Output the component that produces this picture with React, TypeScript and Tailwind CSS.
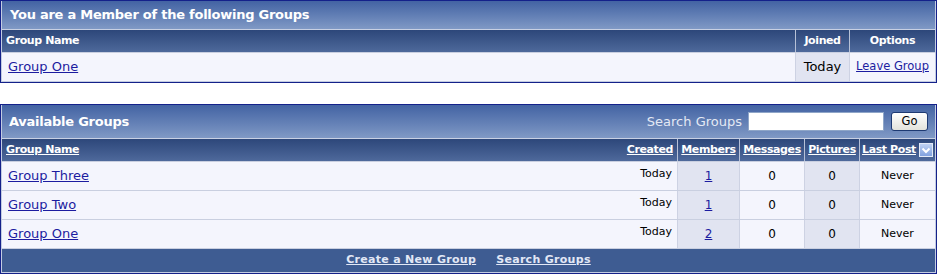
import React from "react";

const groups = [
  { name: "Group Three", created: "Today", members: "1", messages: "0", pictures: "0", lastPost: "Never" },
  { name: "Group Two", created: "Today", members: "1", messages: "0", pictures: "0", lastPost: "Never" },
  { name: "Group One", created: "Today", members: "2", messages: "0", pictures: "0", lastPost: "Never" },
];

const SortIcon: React.FC = () => (
  <svg width="14" height="14" viewBox="0 0 14 14" className="ml-[3px]">
    <defs>
      <linearGradient id="sortg" x1="0" y1="0" x2="0" y2="1">
        <stop offset="0" stopColor="#c2d4f4" />
        <stop offset="1" stopColor="#7e9fde" />
      </linearGradient>
    </defs>
    <rect x="0.5" y="0.5" width="13" height="13" fill="url(#sortg)" stroke="#e3eaf8" />
    <path d="M3.5 5.5 L7 9 L10.5 5.5" fill="none" stroke="#ffffff" strokeWidth="2" />
  </svg>
);

const MemberPanel: React.FC = () => (
  <div className="border border-[#14218a]">
    <div className="border border-[#c3cce2] border-t-0">
      <div className="h-[29px] flex items-center px-[8px] bg-gradient-to-b from-[#4363a3] to-[#8099c5] border-b border-[#c8d0e3] text-white font-bold text-[13px] tracking-[-0.25px]">
        You are a Member of the following Groups
      </div>
      <div className="grid grid-cols-[1fr_54px_86px] h-[22px] bg-gradient-to-b from-[#2d477a] to-[#4e699b] text-white font-bold text-[11px] tracking-[-0.4px]">
        <div className="flex items-center px-[4px]">Group Name</div>
        <div className="flex items-center justify-center border-l border-[#b7c1d7]">Joined</div>
        <div className="flex items-center justify-center border-l border-[#b7c1d7]">Options</div>
      </div>
      <div className="grid grid-cols-[1fr_54px_86px] h-[29px] bg-[#f4f5fd] border-t border-[#c9cfe0]">
        <div className="flex items-center px-[6px] text-[13px]">
          <a href="#" className="text-[#1c1ca0] underline">Group One</a>
        </div>
        <div className="flex items-center justify-center bg-[#e1e4f1] border-l border-[#cdd2e3] text-[13px] text-black">Today</div>
        <div className="flex items-center justify-center border-l border-[#cdd2e3] text-[11.5px]">
          <a href="#" className="text-[#1c1ca0] underline">Leave Group</a>
        </div>
      </div>
    </div>
  </div>
);

const cols = "grid grid-cols-[1fr_80px_62px_65px_55px_76px]";

const AvailablePanel: React.FC = () => (
  <div className="mt-[21px] border border-[#14218a]">
    <div className="border border-[#c3cce2] border-t-0">
      <div className="h-[34px] flex items-center justify-between pl-[7px] pr-[7px] bg-gradient-to-b from-[#4363a3] to-[#8099c5] border-b border-[#c8d0e3]">
        <span className="text-white font-bold text-[13px] tracking-[-0.25px]">Available Groups</span>
        <div className="flex items-center">
          <span className="text-[#e4e9f4] text-[13px] mr-[6px]">Search Groups</span>
          <input className="w-[136px] h-[19px] bg-white border border-[#8fa6c8] outline-none" />
          <button className="ml-[7px] w-[37px] h-[19px] rounded-[3px] border border-[#1e3a72] bg-gradient-to-b from-white to-[#e3e3dc] text-[11.5px] text-black">
            Go
          </button>
        </div>
      </div>
      <div className={`${cols} h-[22px] bg-gradient-to-b from-[#2d477a] to-[#4e699b] text-white font-bold text-[11px] tracking-[-0.4px]`}>
        <div className="flex items-center px-[4px]"><a href="#" className="underline">Group Name</a></div>
        <div className="flex items-center justify-end pr-[4px]"><a href="#" className="underline">Created</a></div>
        <div className="flex items-center justify-center border-l border-[#b7c1d7]"><a href="#" className="underline">Members</a></div>
        <div className="flex items-center justify-center border-l border-[#b7c1d7]"><a href="#" className="underline">Messages</a></div>
        <div className="flex items-center justify-center border-l border-[#b7c1d7]"><a href="#" className="underline">Pictures</a></div>
        <div className="flex items-center justify-center border-l border-[#b7c1d7]">
          <a href="#" className="underline">Last Post</a>
          <SortIcon />
        </div>
      </div>
      {groups.map((g) => (
        <div key={g.name} className={`${cols} h-[29px] bg-[#f4f5fd] border-t border-[#c9cfe0] text-black`}>
          <div className="flex items-center px-[6px] text-[13px]">
            <a href="#" className="text-[#1c1ca0] underline">{g.name}</a>
          </div>
          <div className="flex items-center justify-end pr-[5px] pb-[3px] text-[11px]">{g.created}</div>
          <div className="flex items-center justify-center bg-[#e1e4f1] border-l border-[#cdd2e3] text-[12px]">
            <a href="#" className="text-[#1c1ca0] underline">{g.members}</a>
          </div>
          <div className="flex items-center justify-center border-l border-[#cdd2e3] text-[12px]">{g.messages}</div>
          <div className="flex items-center justify-center bg-[#e1e4f1] border-l border-[#cdd2e3] text-[12px]">{g.pictures}</div>
          <div className="flex items-center justify-center border-l border-[#cdd2e3] text-[11px]">{g.lastPost}</div>
        </div>
      ))}
      <div className="h-[24px] flex items-center justify-center gap-[20px] bg-[#3e5c92] border-t border-[#c9cfe0] text-[11px] font-bold tracking-[0.3px] text-[#e2e8f6]">
        <a href="#" className="underline">Create a New Group</a>
        <a href="#" className="underline">Search Groups</a>
      </div>
    </div>
  </div>
);

export default function App() {
  return (
    <div className="w-[937px] h-[276px] bg-white font-['DejaVu_Sans',sans-serif]">
      <MemberPanel />
      <AvailablePanel />
    </div>
  );
}
